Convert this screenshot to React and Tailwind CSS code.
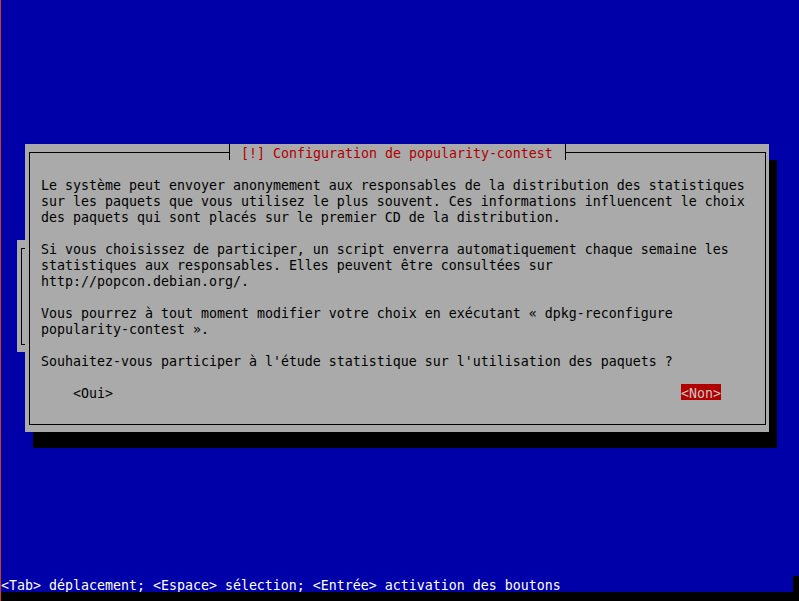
import React from 'react';

const body = [
  'Le système peut envoyer anonymement aux responsables de la distribution des statistiques',
  'sur les paquets que vous utilisez le plus souvent. Ces informations influencent le choix',
  'des paquets qui sont placés sur le premier CD de la distribution.',
  '',
  'Si vous choisissez de participer, un script enverra automatiquement chaque semaine les',
  'statistiques aux responsables. Elles peuvent être consultées sur',
  'http://popcon.debian.org/.',
  '',
  'Vous pourrez à tout moment modifier votre choix en exécutant « dpkg-reconfigure',
  'popularity-contest ».',
  '',
  "Souhaitez-vous participer à l'étude statistique sur l'utilisation des paquets ?",
];

export default function App() {
  return (
    <div
      className="flex h-[601px] w-[799px] overflow-hidden text-[13.29px] leading-4"
      style={{ fontFamily: '"DejaVu Sans Mono", "Liberation Mono", monospace' }}
    >
      <div className="w-px shrink-0 bg-[#d03a1f]" />
      <div className="flex flex-1 flex-col bg-[#0000a8]">
        <div className="relative h-[576px]">
          {/* dialog behind */}
          <div className="absolute left-[16px] top-[240px] h-[112px] w-[200px] bg-[#aaaaaa]">
            <div className="ml-[4px] mt-[8px] h-[97px] border-y border-l border-black" />
          </div>

          {/* popularity-contest dialog */}
          <div className="relative ml-[24px] mt-[144px] h-[288px] w-[744px] bg-[#aaaaaa] pb-[7px] pl-[4px] pr-[3px] pt-[8px] shadow-[8px_16px_0_0_#000]">
            <div className="h-[273px] border border-black">
              <div className="-mt-[9px] ml-[199px] flex h-4 w-[337px] border-x border-black bg-[#aaaaaa] pl-[11px] text-[#b00000]">
                <span className="whitespace-pre pt-[2px]">[!] Configuration de popularity-contest</span>
              </div>
              <div className="mt-4 pl-[11px] text-black">
                {body.map((line, i) => (
                  <div key={i} className="h-4 whitespace-pre pt-[2px]">
                    {line}
                  </div>
                ))}
              </div>
              <div className="mt-4 flex h-4 pl-[43px] text-black">
                <span className="w-[40px] whitespace-pre pt-[2px]">&lt;Oui&gt;</span>
                <span className="ml-[568px] w-[40px] whitespace-pre bg-[#b00000] pt-[2px] text-[#c8c8c8]">&lt;Non&gt;</span>
              </div>
            </div>
          </div>
        </div>

        <div className="flex h-4">
          <div className="flex-1 whitespace-pre pt-[2px] text-white">
            &lt;Tab&gt; déplacement; &lt;Espace&gt; sélection; &lt;Entrée&gt; activation des boutons
          </div>
          <div className="w-[6px] bg-black" />
        </div>
        <div className="h-[9px] bg-black" />
      </div>
    </div>
  );
}
